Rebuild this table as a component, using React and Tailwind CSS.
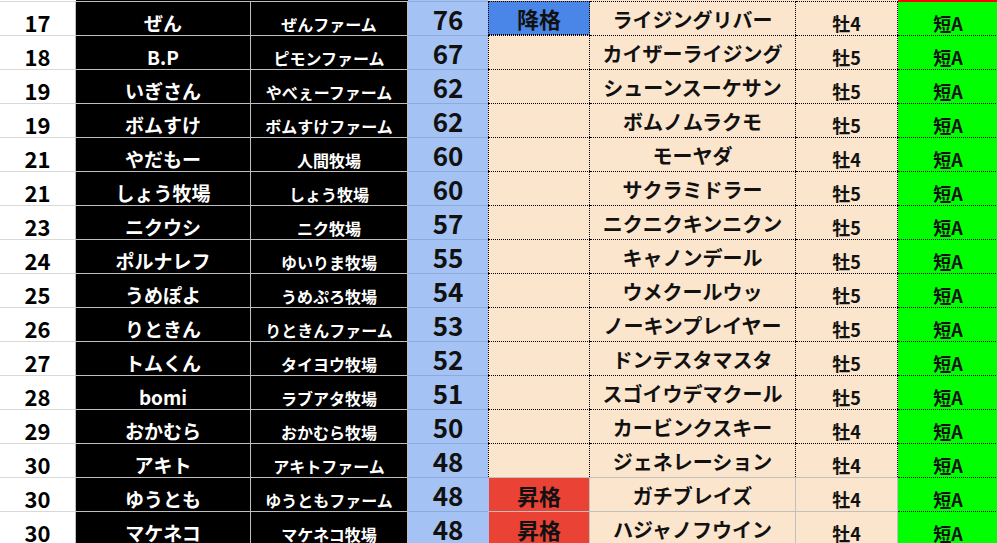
import React from 'react';

const rows = [
  ['17', 'ぜん', 'ぜんファーム', '76', '降格', 'ライジングリバー', '牡4'],
  ['18', 'B.P', 'ピモンファーム', '67', '', 'カイザーライジング', '牡5'],
  ['19', 'いぎさん', 'やべぇーファーム', '62', '', 'シューンスーケサン', '牡5'],
  ['19', 'ボムすけ', 'ボムすけファーム', '62', '', 'ボムノムラクモ', '牡5'],
  ['21', 'やだもー', '人間牧場', '60', '', 'モーヤダ', '牡4'],
  ['21', 'しょう牧場', 'しょう牧場', '60', '', 'サクラミドラー', '牡5'],
  ['23', 'ニクウシ', 'ニク牧場', '57', '', 'ニクニクキンニクン', '牡5'],
  ['24', 'ポルナレフ', 'ゆいりま牧場', '55', '', 'キャノンデール', '牡5'],
  ['25', 'うめぽよ', 'うめぷろ牧場', '54', '', 'ウメクールウッ', '牡5'],
  ['26', 'りときん', 'りときんファーム', '53', '', 'ノーキンプレイヤー', '牡5'],
  ['27', 'トムくん', 'タイヨウ牧場', '52', '', 'ドンテスタマスタ', '牡5'],
  ['28', 'bomi', 'ラブアタ牧場', '51', '', 'スゴイウデマクール', '牡5'],
  ['29', 'おかむら', 'おかむら牧場', '50', '', 'カービンクスキー', '牡4'],
  ['30', 'アキト', 'アキトファーム', '48', '', 'ジェネレーション', '牡4'],
  ['30', 'ゆうとも', 'ゆうともファーム', '48', '昇格', 'ガチブレイズ', '牡4'],
  ['30', 'マケネコ', 'マケネコ牧場', '48', '昇格', 'ハジャノフウイン', '牡4'],
];

const cell = 'h-[34px] shrink-0 flex justify-center leading-none font-bold whitespace-nowrap';

function Row({ r, first }) {
  const [rank, owner, farm, score, status, horse, sex] = r;
  const up = status === '昇格';
  const down = status === '降格';
  const peachBorder = up
    ? 'border-t border-r border-t-[#c0c0c0] border-r-[#c0c0c0]'
    : 'border-t border-r border-dotted border-black';

  return (
    <div className="flex">
      <div className={`${cell} items-end w-[76px] bg-white text-black border-t border-r border-t-[#d9d9d9] border-r-[#c0c0c0] text-[22px] pb-[2px]`}>
        {rank}
      </div>
      <div className={`${cell} items-end w-[175px] bg-black text-white border-t border-r border-[#bfbfbf] text-[19px] pb-[3px]`}>
        {owner}
      </div>
      <div className={`${cell} items-end w-[157px] bg-black text-white border-t border-r border-[#bfbfbf] text-[16px] pb-[3px]`}>
        {farm}
      </div>
      <div className={`${cell} items-center w-[80px] bg-[#a4c2f4] text-[#111] border-t border-t-[#8eaad8] text-[26px] pt-[1px]`}>
        {score}
      </div>
      <div
        className={`${cell} items-center w-[102px] text-[#111] text-[22px] ${
          up
            ? 'bg-[#ea4335] border-t border-r border-t-[#c0c0c0] border-r-[#c0c0c0] border-l border-l-[#a4c2f4]'
            : down
            ? 'bg-[#4a86e8] border border-dotted border-black'
            : 'bg-[#fce5cd] border-t border-r border-l border-dotted border-black'
        }`}
      >
        {status}
      </div>
      <div className={`${cell} items-end w-[206px] bg-[#fce5cd] text-[#111] text-[20px] pb-[5px] ${peachBorder}`}>
        {horse}
      </div>
      <div className={`${cell} items-end w-[102px] bg-[#fce5cd] text-[#111] text-[18px] pb-[3px] ${peachBorder}`}>
        {sex}
      </div>
      <div
        className={`${cell} items-end w-[100px] bg-[#00ff00] text-[#111] text-[18px] pb-[3px] border-t ${
          first ? 'border-solid border-t-[#ff0000]' : 'border-dotted border-black'
        }`}
      >
        短A
      </div>
    </div>
  );
}

export default function App() {
  return (
    <div className="w-[997px] h-[543px] overflow-hidden bg-white font-['Noto_Sans_CJK_JP','Noto_Sans',sans-serif]">
      <div className="flex h-px">
        <div className="w-[76px] shrink-0 bg-white" />
        <div className="w-[332px] shrink-0 bg-black" />
        <div className="w-[80px] shrink-0 bg-[#a4c2f4]" />
        <div className="w-[410px] shrink-0 bg-[#fce5cd]" />
        <div className="w-[100px] shrink-0 bg-[#ff0000]" />
      </div>
      {rows.map((r, i) => (
        <Row key={i} r={r} first={i === 0} />
      ))}
    </div>
  );
}
